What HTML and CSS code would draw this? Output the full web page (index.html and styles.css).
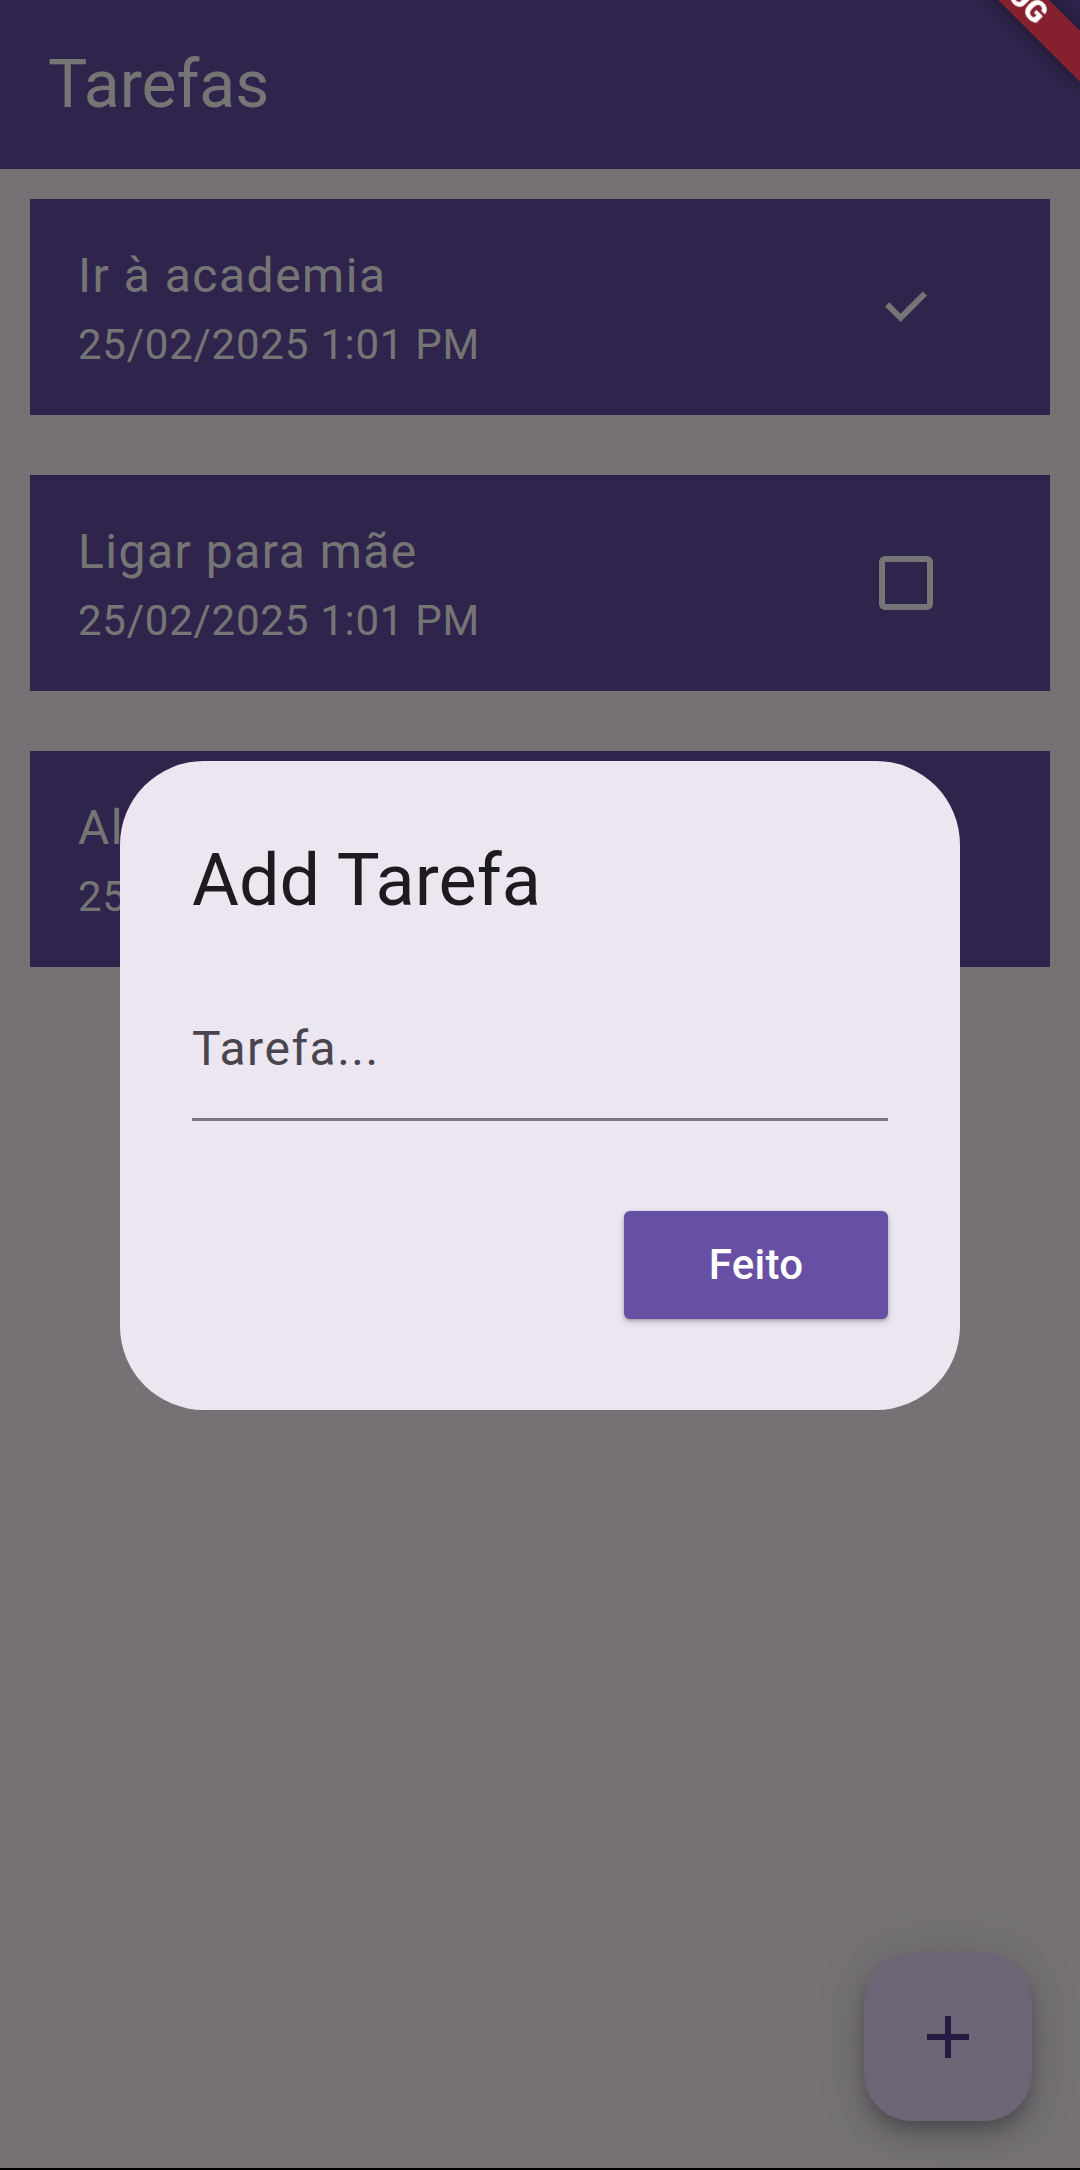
FILE: index.html
```html
<!DOCTYPE html>
<html lang="pt">
<head>
<meta charset="utf-8">
<title>Tarefas</title>
<link rel="stylesheet" href="styles.css">
</head>
<body>
<div class="app">
  <header class="appbar">
    <h1 class="appbar-title">Tarefas</h1>
  </header>
  <main class="list">
    <div class="card">
      <div class="card-text">
        <div class="card-title">Ir à academia</div>
        <div class="card-date">25/02/2025 1:01 PM</div>
      </div>
      <div class="card-trailing">
        <span class="checkbox checked">
          <svg class="check-mark" viewBox="0 0 54 54"><path d="M8.1 24.3 L21.6 37.8 L45.9 13.5"/></svg>
        </span>
      </div>
    </div>
    <div class="card">
      <div class="card-text">
        <div class="card-title">Ligar para mãe</div>
        <div class="card-date">25/02/2025 1:01 PM</div>
      </div>
      <div class="card-trailing">
        <span class="checkbox"></span>
      </div>
    </div>
    <div class="card">
      <div class="card-text">
        <div class="card-title">Almoçar</div>
        <div class="card-date">25/02/2025 1:01 PM</div>
      </div>
      <div class="card-trailing">
        <span class="checkbox"></span>
      </div>
    </div>
  </main>
  <button class="fab" type="button" aria-label="Adicionar">
    <svg class="fab-icon" viewBox="0 0 24 24"><path d="M19 13h-6v6h-2v-6H5v-2h6V5h2v6h6v2z"/></svg>
  </button>
</div>
<div class="navline"></div>

<div class="barrier">
  <div class="dialog" role="dialog">
    <h2 class="dialog-title">Add Tarefa</h2>
    <div class="field">
      <span class="field-placeholder">Tarefa...</span>
    </div>
    <div class="dialog-actions">
      <button class="btn-primary" type="button">Feito</button>
    </div>
  </div>
</div>

<div class="debug-banner">
  <div class="debug-ribbon">DEBUG</div>
</div>
</body>
</html>
```

FILE: styles.css
```css
* {
  box-sizing: border-box;
  margin: 0;
  padding: 0;
}

html, body {
  width: 1080px;
  height: 2170px;
  overflow: hidden;
}

body {
  font-family: Roboto, "Noto Sans", "Liberation Sans", sans-serif;
  background: #000;
}

.app {
  position: relative;
  height: 2168px;
  display: flex;
  flex-direction: column;
  background: #fef7ff;
}

.navline {
  height: 2px;
  background: #000;
}

/* App bar */
.appbar {
  flex: none;
  height: 169px;
  background: #6750a4;
  display: flex;
  align-items: center;
  padding-left: 48px;
}

.appbar-title {
  font-size: 66px;
  font-weight: 400;
  line-height: 84px;
  color: #ffffff;
}

/* List of tasks */
.list {
  flex: 1;
  display: flex;
  flex-direction: column;
  gap: 60px;
  padding: 30px;
}

.card {
  height: 216px;
  background: #6750a4;
  display: flex;
  align-items: center;
  padding-left: 48px;
  padding-right: 72px;
}

.card-text {
  flex: 1;
  min-width: 0;
}

.card-title {
  font-size: 48px;
  line-height: 72px;
  letter-spacing: 1.5px;
  color: #ffffff;
  white-space: nowrap;
}

.card-date {
  margin-top: 3px;
  font-size: 42px;
  line-height: 60px;
  letter-spacing: 0.75px;
  color: #ffffff;
  white-space: nowrap;
}

.card-trailing {
  flex: none;
  width: 144px;
  height: 144px;
  display: flex;
  align-items: center;
  justify-content: center;
}

.checkbox {
  display: block;
  width: 54px;
  height: 54px;
  border: 6px solid #ffffff;
  border-radius: 6px;
}

.checkbox.checked {
  border: none;
  background: #6750a4;
}

.check-mark {
  display: block;
  width: 54px;
  height: 54px;
}

.check-mark path {
  fill: none;
  stroke: #ffffff;
  stroke-width: 6;
}

/* Floating action button */
.fab {
  position: absolute;
  right: 48px;
  bottom: 47px;
  width: 168px;
  height: 168px;
  border: none;
  border-radius: 48px;
  background: #eaddff;
  display: flex;
  align-items: center;
  justify-content: center;
  box-shadow: 0 9px 15px -3px rgba(0, 0, 0, 0.2),
              0 18px 30px rgba(0, 0, 0, 0.14),
              0 3px 54px rgba(0, 0, 0, 0.12);
}

.fab-icon {
  width: 72px;
  height: 72px;
  fill: #4f378b;
}

/* Modal */
.barrier {
  position: fixed;
  inset: 0;
  background: rgba(0, 0, 0, 0.541);
  display: flex;
  align-items: center;
  justify-content: center;
}

.dialog {
  width: 840px;
  background: #ece6f0;
  border-radius: 84px;
  padding: 72px 72px 91px;
  display: flex;
  flex-direction: column;
}

.dialog-title {
  font-size: 72px;
  font-weight: 400;
  line-height: 96px;
  color: #1d1b20;
}

.field {
  margin-top: 84px;
  padding-bottom: 33px;
  border-bottom: 3px solid #79747e;
}

.field-placeholder {
  display: block;
  font-size: 48px;
  line-height: 72px;
  letter-spacing: 1.5px;
  color: #49454f;
}

.dialog-actions {
  margin-top: 90px;
  display: flex;
  justify-content: flex-end;
}

.btn-primary {
  width: 264px;
  height: 108px;
  border: none;
  border-radius: 6px;
  background: #6750a4;
  color: #ffffff;
  font-family: Roboto, "Noto Sans", sans-serif;
  font-size: 42px;
  font-weight: 500;
  letter-spacing: 0.3px;
  box-shadow: 0 3px 6px rgba(0, 0, 0, 0.22), 0 1px 3px rgba(0, 0, 0, 0.18);
}

/* Debug banner (overlay in the top-right corner) */
.debug-banner {
  position: fixed;
  left: 1080px;
  top: -88px;
  width: 0;
  height: 0;
  transform-origin: 0 0;
  transform: rotate(45deg);
}

.debug-ribbon {
  position: absolute;
  left: -120px;
  top: 84px;
  width: 240px;
  height: 36px;
  background: rgba(183, 28, 28, 0.627);
  color: #ffffff;
  font-size: 30.6px;
  font-weight: 900;
  line-height: 36px;
  text-align: center;
  box-shadow: 0 0 20px rgba(0, 0, 0, 0.45);
}
```
